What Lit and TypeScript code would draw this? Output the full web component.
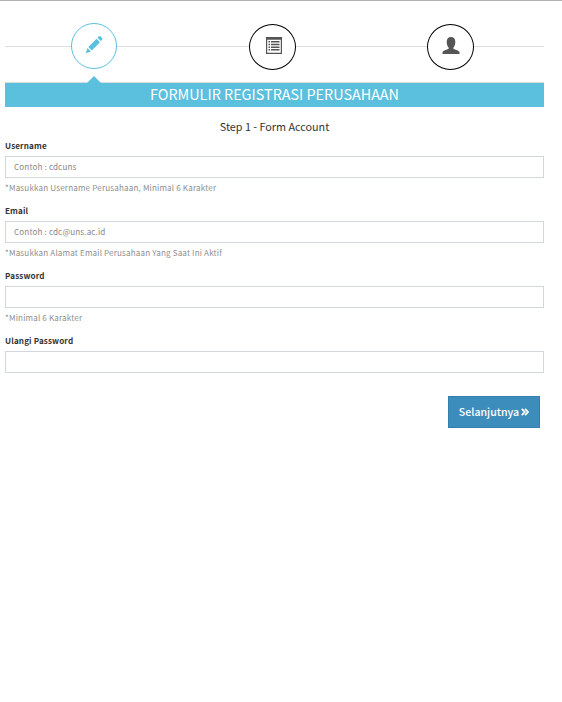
import { LitElement, html, svg, css } from "lit";
import { customElement, property } from "lit/decorators.js";

@customElement("form-field")
class FormField extends LitElement {
  @property() label = "";
  @property() placeholder = "";
  @property() hint = "";
  @property() type = "text";
  static styles = css`
    :host { display: block; height: 65px; }
    * { box-sizing: border-box; }
    label { display: block; height: 16px; line-height: 12px; font-size: 8.1px; font-weight: 700; color: #333; letter-spacing: 0.14px; }
    input { display: block; width: 100%; height: 22px; margin: 0; padding: 0 8px 2px; border: 1px solid #d2d6de; border-radius: 0; background: #fff; font: inherit; font-size: 8.1px; letter-spacing: 0.14px; color: #555; outline: none; }
    input::placeholder { color: #888; opacity: 1; }
    .hint { display: block; margin-top: 4px; line-height: 12px; font-size: 8.1px; letter-spacing: 0.155px; color: #8f8f8f; white-space: nowrap; }
  `;
  render() {
    return html`<label for="f">${this.label}</label>
      <input id="f" type=${this.type} placeholder=${this.placeholder} />
      <span class="hint">${this.hint}</span>`;
  }
}

const pencil = svg`<path d="M14 .3q.7-.5 1.300 0l2 2q.5.600 0 1.300l-1.500 1.500-3.300-3.300z M11.600 2.800l3.400 3.400-8.300 8.300-3.400-3.400z M2.500 12l3.400 3.400-5.200 1.800z"/>`;
const list = svg`<path fill-rule="evenodd" d="M2 0h16v17H2z M3.200 2.800V15.800h13.600V2.800z"/><path d="M4.500 4H6v1.500H4.500z M7 4h8.500v1.500H7z M4.500 6.700H6v1.500H4.500z M7 6.700h8.500v1.500H7z M4.500 9.400H6v1.500H4.500z M7 9.400h8.500v1.500H7z M4.500 12.100H6v1.500H4.500z M7 12.100h8.500v1.500H7z"/>`;
const user = svg`<path d="M4.700 5C4.700 1.700 6.300 0 9 0s4.300 1.700 4.300 5c0 2.500-.8 4.500-1.800 5.600-.3.400-.2 1.200.3 1.500l3.900 1.500c1.200.5 1.800 1.200 1.800 2V17H.5v-1.400c0-.8.6-1.500 1.800-2l3.900-1.500c.6-.3.700-1.100.3-1.500C5.500 9.500 4.700 7.500 4.700 5z"/>`;

@customElement("app-root")
class AppRoot extends LitElement {
  static styles = css`
    :host { display: block; box-sizing: border-box; height: 702px; padding: 0 18px 0 5px; background: #fff; font-family: "Noto Sans CJK JP", "Noto Sans", sans-serif; box-shadow: inset 0 1px #b1b1b1; overflow: hidden; }
    * { box-sizing: border-box; }
    .steps { position: relative; display: grid; grid-template-columns: 178px 178px 178px; height: 83px; padding-top: 23px; border-bottom: 1px solid #ddd; }
    .steps::before { content: ""; position: absolute; left: 0; right: 0; top: 46px; height: 1px; background: #ddd; }
    .step { position: relative; display: flex; justify-content: center; }
    .circle { display: flex; justify-content: center; width: 47px; height: 46px; margin-top: 1px; margin-left: 1px; padding-top: 12px; border: 1px solid #000; border-radius: 50%; background: #fff; }
    .active .circle { width: 46px; margin: 0; border-color: #5bc0de; }
    .circle svg { width: 18px; height: 18px; fill: #555; overflow: visible; }
    .active .circle svg { fill: #5bc0de; }
    .active::after { content: ""; position: absolute; left: 82px; top: 53px; border: 7px solid transparent; border-top: 0; border-bottom-color: #5bc0de; }
    .title { height: 24px; line-height: 21px; background: #5bc0de; color: #fff; text-align: center; font-size: 14.4px; white-space: nowrap; }
    .subtitle { height: 33px; padding-top: 10px; line-height: 18px; text-align: center; font-size: 10.8px; color: #333; }
    .actions { display: flex; justify-content: flex-end; padding-right: 4px; margin-top: -4px; }
    button { display: flex; align-items: center; justify-content: center; gap: 2px; width: 92px; height: 32px; padding: 0; border: 1px solid #367fa9; border-radius: 0; background: #3c8dbc; color: #fff; font: 500 10.6px "Noto Sans CJK JP", sans-serif; }
    button span { margin-top: -2px; }
    button svg { width: 8px; height: 8px; fill: none; stroke: #fff; stroke-width: 1.7; }
  `;
  render() {
    return html`
      <nav class="steps">
        ${[pencil, list, user].map((icon, i) => html`<div class="step ${i ? "" : "active"}"><div class="circle"><svg viewBox="0 0 18 18">${icon}</svg></div></div>`)}
      </nav>
      <div class="title">FORMULIR REGISTRASI PERUSAHAAN</div>
      <div class="subtitle"><span>Step 1 - Form Account</span></div>
      <form-field label="Username" placeholder="Contoh : cdcuns" hint="*Masukkan Username Perusahaan, Minimal 6 Karakter"></form-field>
      <form-field label="Email" placeholder="Contoh : cdc@uns.ac.id" hint="*Masukkan Alamat Email Perusahaan Yang Saat Ini Aktif"></form-field>
      <form-field label="Password" type="password" hint="*Minimal 6 Karakter"></form-field>
      <form-field label="Ulangi Password" type="password"></form-field>
      <div class="actions"><button><span>Selanjutnya</span><svg viewBox="0 0 8 8"><path d="M.8 .8L3.800 4 .8 7.200M4 .8L7 4 4 7.200"/></svg></button></div>
    `;
  }
}
